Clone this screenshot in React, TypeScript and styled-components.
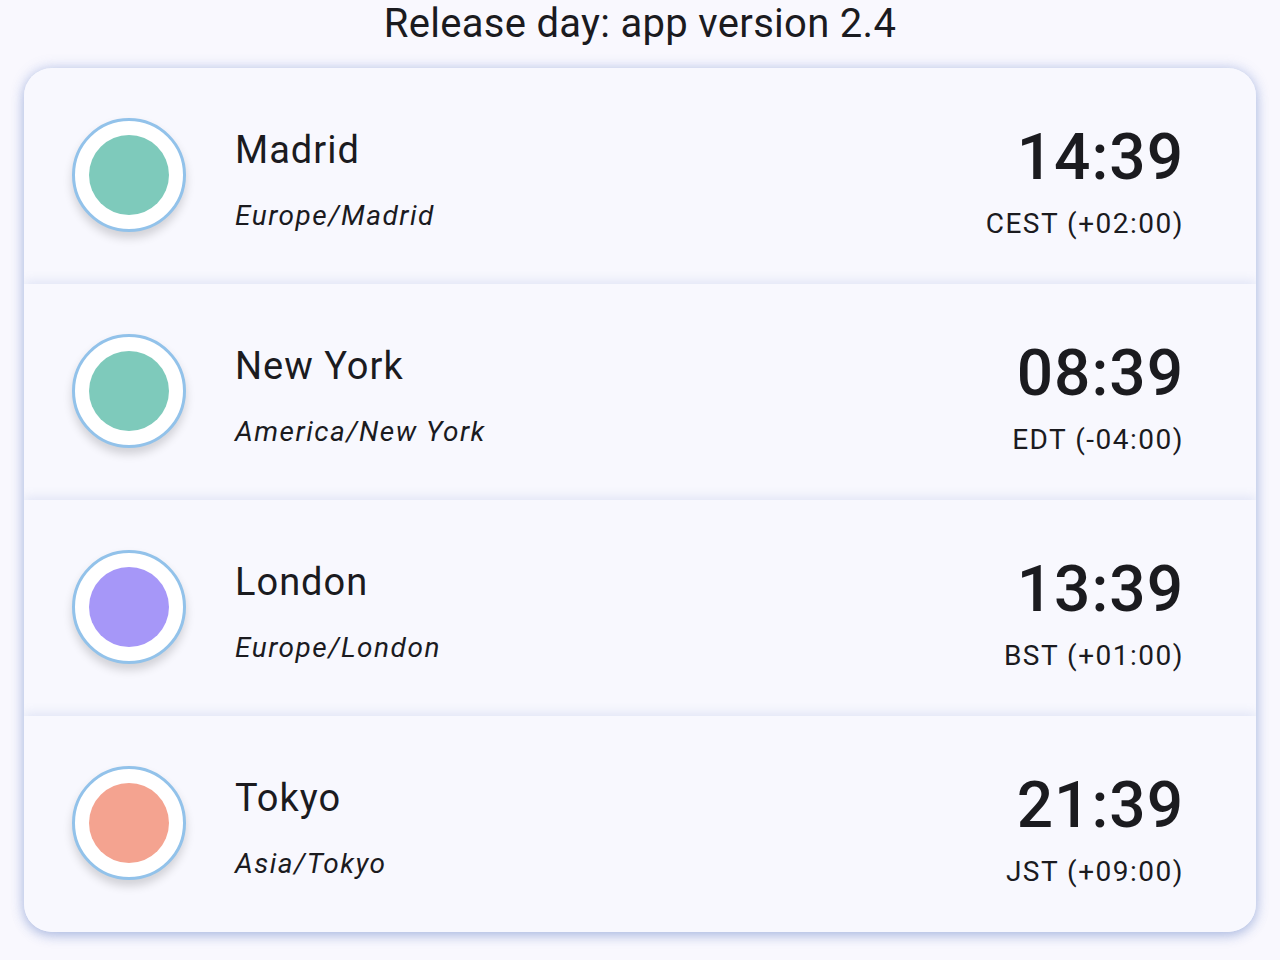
import React from 'react';
import styled, { createGlobalStyle } from 'styled-components';

const GlobalStyle = createGlobalStyle`
  html, body {
    margin: 0;
    padding: 0;
    background: #f9f8fe;
    font-family: Roboto, "Noto Sans", sans-serif;
    color: #1b1b1f;
  }
`;

const Page = styled.div`
  width: 1280px;
  height: 960px;
  overflow: hidden;
  background: #f9f8fe;
`;

const Title = styled.h1`
  margin: 0;
  height: 48px;
  line-height: 48px;
  text-align: center;
  font-size: 40px;
  font-weight: 400;
  letter-spacing: 0.3px;
  color: #1b1b1f;
`;

const Card = styled.div`
  margin: 20px 24px 0;
  border-radius: 28px;
  background: #f8f8fe;
  box-shadow: 0 4px 12px rgba(90, 120, 190, 0.34), 0 0 14px rgba(110, 135, 205, 0.3);
  overflow: hidden;
`;

const Row = styled.div<{ $layer: number }>`
  height: 216px;
  box-sizing: border-box;
  display: flex;
  align-items: center;
  padding: 0 72px 0 48px;
  background: #f8f8fe;
  position: relative;
  z-index: ${(p) => p.$layer};
  box-shadow: 0 -3px 10px rgba(110, 135, 205, 0.16);
`;

const Avatar = styled.div`
  width: 114px;
  height: 114px;
  box-sizing: border-box;
  border-radius: 50%;
  border: 3px solid #92c2ea;
  background: #ffffff;
  display: flex;
  align-items: center;
  justify-content: center;
  box-shadow: 0 6px 10px rgba(0, 0, 0, 0.16);
  flex-shrink: 0;
  margin-bottom: 2px;
`;

const Dot = styled.div<{ $color: string }>`
  width: 80px;
  height: 80px;
  border-radius: 50%;
  background: ${(p) => p.$color};
`;

const Info = styled.div`
  flex: 1;
  margin-left: 49px;
  display: flex;
  flex-direction: column;
  gap: 24px;
  margin-top: 8px;
`;

const City = styled.div`
  font-size: 38px;
  line-height: 48px;
  letter-spacing: 1px;
`;

const Zone = styled.div`
  font-size: 28px;
  line-height: 36px;
  font-style: italic;
  letter-spacing: 1.5px;
`;

const TimeBox = styled.div`
  display: flex;
  flex-direction: column;
  align-items: flex-end;
  gap: 12px;
  margin-top: 12px;
`;

const Time = styled.div`
  font-size: 64px;
  line-height: 72px;
  font-weight: 500;
  letter-spacing: 1px;
`;

const Offset = styled.div`
  font-size: 28px;
  line-height: 36px;
  letter-spacing: 1.5px;
`;

const cities = [
  { name: 'Madrid', zone: 'Europe/Madrid', time: '14:39', offset: 'CEST (+02:00)', color: '#7ecabb' },
  { name: 'New York', zone: 'America/New York', time: '08:39', offset: 'EDT (-04:00)', color: '#7ecabb' },
  { name: 'London', zone: 'Europe/London', time: '13:39', offset: 'BST (+01:00)', color: '#a697f8' },
  { name: 'Tokyo', zone: 'Asia/Tokyo', time: '21:39', offset: 'JST (+09:00)', color: '#f4a390' },
];

export default function App() {
  return (
    <Page>
      <GlobalStyle />
      <Title>Release day: app version 2.4</Title>
      <Card>
        {cities.map((c, i) => (
          <Row key={c.name} $layer={i + 1}>
            <Avatar>
              <Dot $color={c.color} />
            </Avatar>
            <Info>
              <City>{c.name}</City>
              <Zone>{c.zone}</Zone>
            </Info>
            <TimeBox>
              <Time>{c.time}</Time>
              <Offset>{c.offset}</Offset>
            </TimeBox>
          </Row>
        ))}
      </Card>
    </Page>
  );
}
